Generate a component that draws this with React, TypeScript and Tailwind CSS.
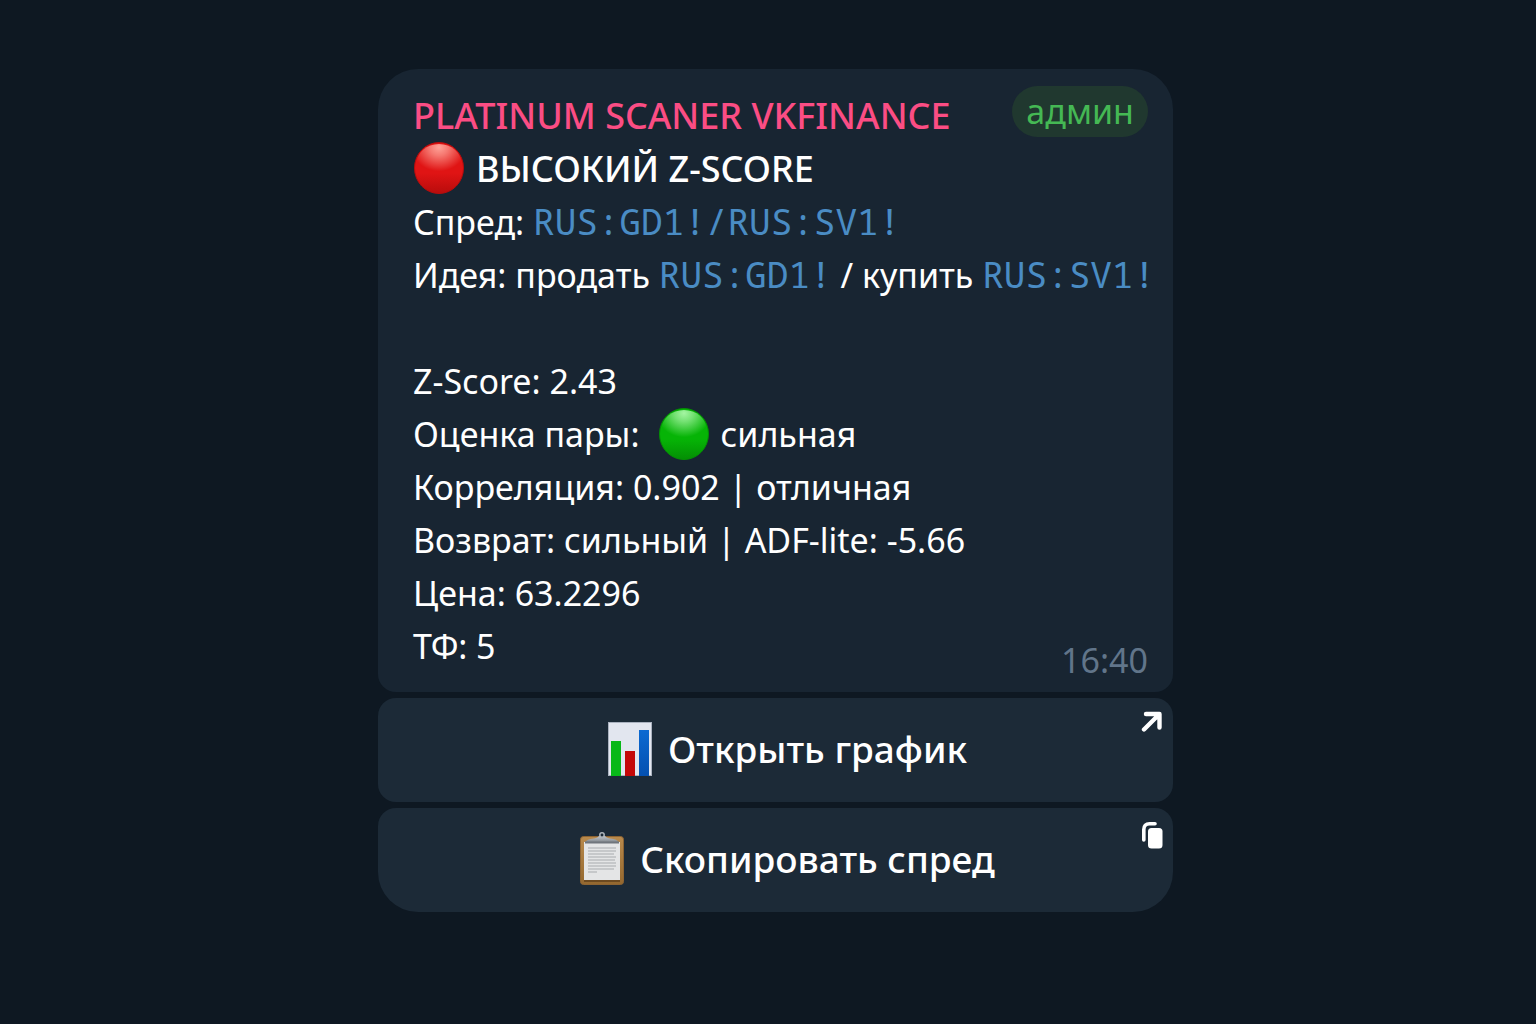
import type { ReactNode } from 'react';

interface BallProps {
  id: string;
  label: string;
  top: string;
  middle: string;
  bottom: string;
}

function Ball({ id, label, top, middle, bottom }: BallProps) {
  return (
    <svg viewBox="0 0 51 54" className="h-[54px] w-[51px] shrink-0" role="img" aria-label={label}>
      <defs>
        <linearGradient id={id} x1="0" y1="0" x2="0" y2="1">
          <stop offset="0" stopColor={middle} />
          <stop offset="0.6" stopColor={middle} />
          <stop offset="1" stopColor={bottom} />
        </linearGradient>
        <radialGradient id={`${id}-shine`} cx="0.5" cy="0.08" r="0.6">
          <stop offset="0" stopColor={top} />
          <stop offset="0.35" stopColor={top} stopOpacity="0.7" />
          <stop offset="1" stopColor={top} stopOpacity="0" />
        </radialGradient>
      </defs>
      <ellipse cx="26" cy="26" rx="24.5" ry="25.5" fill={`url(#${id})`} stroke={bottom} strokeWidth="1" />
      <ellipse cx="26" cy="22" rx="22.5" ry="20" fill={`url(#${id}-shine)`} />
    </svg>
  );
}

function ChartIcon() {
  return (
    <svg viewBox="0 0 44 54" className="h-[54px] w-11 shrink-0" aria-hidden="true">
      <defs>
        <linearGradient id="chart-blue" x1="0" y1="0" x2="0" y2="1">
          <stop offset="0" stopColor="#0c6ad2" />
          <stop offset="1" stopColor="#0450b0" />
        </linearGradient>
      </defs>
      <rect x="0.5" y="0.5" width="43" height="53" fill="#e2e6ef" stroke="#aab2bf" />
      <rect x="3" y="19" width="10" height="35" fill="#08b818" />
      <rect x="17" y="29" width="10" height="25" fill="#c40808" />
      <rect x="31" y="8" width="10" height="46" fill="url(#chart-blue)" />
    </svg>
  );
}

function ClipboardIcon() {
  return (
    <svg viewBox="0 0 44 54" className="h-[54px] w-11 shrink-0" aria-hidden="true">
      <defs>
        <linearGradient id="board" x1="0" y1="0" x2="0" y2="1">
          <stop offset="0" stopColor="#b98a4c" />
          <stop offset="1" stopColor="#94682f" />
        </linearGradient>
        <linearGradient id="clip" x1="0" y1="0" x2="0" y2="1">
          <stop offset="0" stopColor="#c3c8cd" />
          <stop offset="1" stopColor="#7d838a" />
        </linearGradient>
      </defs>
      <rect x="0.5" y="4.5" width="43" height="48" rx="3" fill="url(#board)" stroke="#8c6332" />
      <rect x="4" y="47" width="36" height="3" fill="#6d4a20" />
      <rect x="4" y="10" width="36" height="38" fill="#e4e5e6" />
      <path
        d="M8 16h28M8 19h28M8 22h26M8 25h28M8 28h27M8 31h28M8 34h28M8 37h26M8 40h9"
        stroke="#c6c8ca"
        strokeWidth="2"
      />
      <path d="M5 10.5C6 8 9 7 14 6.5C17 6 18 5 19 4h6c1 1 2 2 5 2.5C35 7 38 8 39 10.5Z" fill="url(#clip)" />
      <path d="M5 10.5h34" stroke="#70767d" strokeWidth="2" />
      <circle cx="22" cy="3" r="2.2" fill="#1c2935" stroke="#aeb5bc" strokeWidth="1.5" />
    </svg>
  );
}

function ArrowIcon() {
  return (
    <svg viewBox="0 0 22 22" className="size-[22px]" fill="none" aria-hidden="true">
      <path
        d="M5 3h13.5v13.5M18 3.5L3 18.5"
        stroke="#fff"
        strokeWidth="4.4"
        strokeLinejoin="round"
        strokeLinecap="round"
      />
    </svg>
  );
}

function CopyIcon() {
  return (
    <svg viewBox="0 0 22 28" className="h-7 w-[22px]" fill="none" aria-hidden="true">
      <path d="M2.8 19V8.5C2.8 4.8 4.8 2.8 8.5 2.8H14" stroke="#fff" strokeWidth="3.6" strokeLinecap="round" />
      <rect x="7" y="7" width="14.5" height="20.5" rx="3.5" fill="#fff" />
    </svg>
  );
}

function Ticker({ children }: { children: ReactNode }) {
  return (
    <a href="#" className="font-['Noto_Sans_Mono','Noto_Sans_CJK_SC',monospace] text-4xl leading-[53px] text-[#4a8cc4]">
      {children}
    </a>
  );
}

interface ActionButtonProps {
  icon: ReactNode;
  corner: ReactNode;
  className: string;
  children: ReactNode;
}

function ActionButton({ icon, corner, className, children }: ActionButtonProps) {
  return (
    <button
      type="button"
      className={`relative flex w-full items-center justify-center gap-4 bg-[#1c2a37] pt-6 pb-6.5 pl-6 text-[37px] leading-[54px] font-medium ${className}`}
    >
      {icon}
      <span>{children}</span>
      <span className="absolute top-[13px] right-[10px]">{corner}</span>
    </button>
  );
}

export default function App() {
  return (
    <main className="flex min-h-screen justify-center bg-[#0e1822] pt-[69px] pb-16 pl-[15px] font-['Noto_Sans',sans-serif] text-white">
      <div className="flex w-full max-w-[795px] flex-col gap-1.5">
        <article className="rounded-t-[40px] rounded-b-[18px] bg-[#182532] pt-[17px] pr-5 pb-[14px] pl-[35px] text-[34px] leading-[53px]">
          <header className="flex items-start justify-between pr-[5px]">
            <h1 className="pt-[3px] text-4xl leading-[53px] font-medium text-[#fb4d84]">PLATINUM SCANER VKFINANCE</h1>
            <span className="rounded-full bg-[#20382f] px-[14px] leading-[51px] text-[#45b854]">админ</span>
          </header>
          <h2 className="flex h-[53px] items-center gap-3 text-4xl leading-[53px] font-medium">
            <Ball id="red" label="Красный" top="#ffa398" middle="#e01414" bottom="#b80c0c" />
            ВЫСОКИЙ Z-SCORE
          </h2>
          <p className="h-[53px]">
            Спред: <Ticker>RUS:GD1!/RUS:SV1!</Ticker>
          </p>
          <p className="h-[53px] whitespace-nowrap">
            Идея: продать <Ticker>RUS:GD1!</Ticker> / купить <Ticker>RUS:SV1!</Ticker>
          </p>
          <p className="pt-[54px]">Z-Score: 2.43</p>
          <p className="flex h-[53px] items-center">
            Оценка пары:
            <span className="mr-3 ml-[18px]">
              <Ball id="green" label="Зелёный" top="#a4f5a2" middle="#06b406" bottom="#048f04" />
            </span>
            сильная
          </p>
          <p>Корреляция: 0.902 | отличная</p>
          <p>Возврат: сильный | ADF-lite: -5.66</p>
          <p>Цена: 63.2296</p>
          <footer className="flex items-end justify-between pr-[5px]">
            <p className="pb-[5px]">ТФ: 5</p>
            <time className="leading-9 text-[#61758a]">16:40</time>
          </footer>
        </article>
        <ActionButton icon={<ChartIcon />} corner={<ArrowIcon />} className="rounded-[18px]">
          Открыть график
        </ActionButton>
        <ActionButton icon={<ClipboardIcon />} corner={<CopyIcon />} className="rounded-t-[18px] rounded-b-[40px]">
          Скопировать спред
        </ActionButton>
      </div>
    </main>
  );
}
